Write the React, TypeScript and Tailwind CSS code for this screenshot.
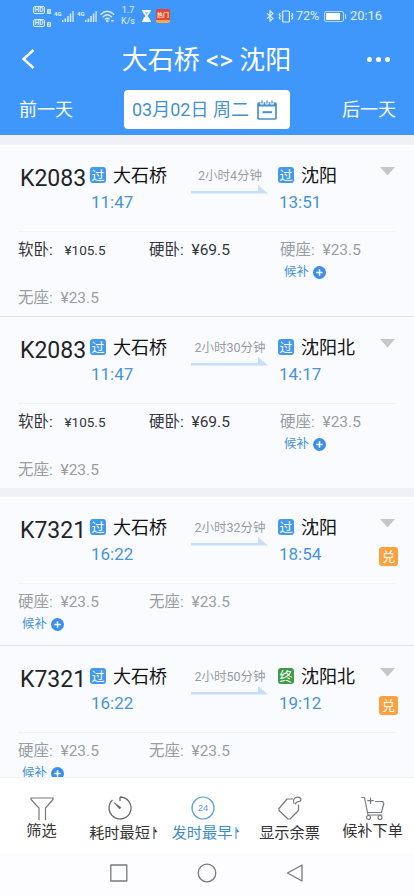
import type { ReactNode } from "react";
import clsx from "clsx";

interface Seat {
  label: string;
  price: string;
  available?: boolean;
  small?: boolean;
  waitlist?: boolean;
}

interface Train {
  code: string;
  from: string;
  to: string;
  depart: string;
  arrive: string;
  duration: string;
  terminal?: boolean;
  exchange?: boolean;
  seats: Seat[];
}

const sleeperSeats: Seat[] = [
  { label: "软卧", price: "¥105.5", available: true, small: true },
  { label: "硬卧", price: "¥69.5", available: true },
  { label: "硬座", price: "¥23.5", waitlist: true },
  { label: "无座", price: "¥23.5" },
];

const basicSeats: Seat[] = [
  { label: "硬座", price: "¥23.5", waitlist: true },
  { label: "无座", price: "¥23.5" },
];

const groups: Train[][] = [
  [
    { code: "K2083", from: "大石桥", to: "沈阳", depart: "11:47", arrive: "13:51", duration: "2小时4分钟", seats: sleeperSeats },
    { code: "K2083", from: "大石桥", to: "沈阳北", depart: "11:47", arrive: "14:17", duration: "2小时30分钟", seats: sleeperSeats },
  ],
  [
    { code: "K7321", from: "大石桥", to: "沈阳", depart: "16:22", arrive: "18:54", duration: "2小时32分钟", exchange: true, seats: basicSeats },
    { code: "K7321", from: "大石桥", to: "沈阳北", depart: "16:22", arrive: "19:12", duration: "2小时50分钟", terminal: true, exchange: true, seats: basicSeats },
  ],
];

function Signal({ className }: { className?: string }) {
  return (
    <div className={clsx("flex items-start", className)}>
      <span className="text-[6px] leading-[7px] font-bold">4G</span>
      <svg width="12" height="12" viewBox="0 0 12 12" fill="#dcecff" className="mt-px">
        <path d="M0 9h1.5v2H0zM2.6 7.4h1.5V11H2.6zM5.2 5h1.5v6H5.2zM7.8 2.6h1.5V11H7.8zM10.4 0h1.3v11h-1.3z" />
      </svg>
    </div>
  );
}

function HdTag({ sim }: { sim: string }) {
  return (
    <div className="flex h-[9px] items-end gap-[2px]">
      <span className="flex h-[8px] w-[12px] items-center justify-center rounded-[2px] border border-[#dcecff] text-[6.5px] leading-none font-bold">
        HD
      </span>
      <span className="flex h-[5px] w-[4px] items-center justify-center rounded-[1px] bg-[#dcecff] text-[4px] leading-none font-bold text-[#3f97fb]">
        {sim}
      </span>
    </div>
  );
}

function StatusBar() {
  return (
    <div className="flex h-[32px] items-center text-[#e4f1ff]">
      <div className="ml-[33px] flex w-[21px] flex-col gap-[4px]">
        <HdTag sim="1" />
        <HdTag sim="2" />
      </div>
      <Signal className="w-[23px]" />
      <Signal className="w-[23px]" />
      <svg width="15" height="13" viewBox="0 0 15 13" fill="none" stroke="#dcecff" strokeWidth="1.4" strokeLinecap="round">
        <path d="M1 4.2Q7.3-1.5 13.6 4.2M3.2 6.7Q7.3 3 11.4 6.7M5.4 9Q7.3 7.3 9.2 9" />
        <circle cx="7.3" cy="11" r=".6" fill="#dcecff" />
        <path d="M11.6 10.8h1.7" />
      </svg>
      <div className="ml-[4px] w-[18px] text-center text-[9px] leading-[11px]">
        <div>1.7</div>
        <div>K/s</div>
      </div>
      <svg width="9" height="12" viewBox="0 0 9 12" className="ml-[5px]">
        <path d="M0 0h9v1.6H8C8 4 6 5 5.4 6 6 7 8 8 8 10.4h1V12H0v-1.6h1C1 8 3 7 3.6 6 3 5 1 4 1 1.6H0z" fill="#fff" />
        <path d="M2.5 2h4L4.5 4.2z" fill="#8cc2fc" />
      </svg>
      <div className="ml-[5px] flex h-[14px] w-[14px] flex-col items-center justify-center rounded-[2px] border-b-[3px] border-[#f3a956] bg-[#e84234] text-[6px] leading-none font-bold text-[#ffe9c0]">
        热门
      </div>
      <svg width="9" height="12" viewBox="0 0 9 12" fill="none" stroke="#e4f1ff" strokeWidth="1.1" className="ml-[96px]">
        <path d="M1 3.3l6 5.2-3 2.700V.8l3 2.700L1 8.700" />
      </svg>
      <svg width="16" height="13" viewBox="0 0 16 13" fill="none" stroke="#e4f1ff" strokeWidth="1.2" className="ml-[3px]">
        <rect x="4.6" y="1" width="6.8" height="11" rx="1" />
        <path d="M2.4 3l-1.2 1.5 1.2 1.6-1.2 1.6 1.2 1.8M13.6 3l1.2 1.5-1.2 1.6 1.2 1.6-1.2 1.8" />
      </svg>
      <span className="ml-[2px] w-[28px] text-[12.5px]">72%</span>
      <div className="flex h-[11px] w-[20px] rounded-[2px] border border-[#b8d8fd] p-px">
        <div className="w-[14px] bg-white" />
      </div>
      <div className="ml-px h-[5px] w-px bg-[#dcecff]" />
      <span className="ml-[4px] text-[12.8px]">20:16</span>
    </div>
  );
}

function Header() {
  return (
    <header className="h-[135px] bg-[#3f97fb] text-white">
      <StatusBar />
      <div className="flex h-[54px] items-center">
        <svg width="14" height="20" viewBox="0 0 14 20" fill="none" stroke="#fff" strokeWidth="2.4" className="ml-[21px]">
          <path d="M12.5 1L2.5 10l10 9" />
        </svg>
        <h1 className="flex-1 pt-[2px] pl-[11px] text-center text-[26px] leading-[36px] whitespace-nowrap">
          大石桥 &lt;&gt; 沈阳
        </h1>
        <div className="mr-[24px] flex w-[23px] justify-between">
          <span className="size-[5px] rounded-full bg-white" />
          <span className="size-[5px] rounded-full bg-white" />
          <span className="size-[5px] rounded-full bg-white" />
        </div>
      </div>
      <div className="mt-[4px] flex h-[39px] items-center justify-between pr-[18px] pl-[19px] text-[18px] leading-[24px]">
        <button className="w-[54px] pt-px whitespace-nowrap">前一天</button>
        <button className="-ml-px flex h-[39px] w-[166px] items-center rounded-[4px] bg-white pl-[8px] whitespace-nowrap text-[#4591cf]">
          <span className="w-[125px] text-left">03月02日 周二</span>
          <svg width="20" height="20" viewBox="0 0 20 20" fill="none" stroke="#4591cf" strokeWidth="1.7">
            <rect x="1" y="3" width="18" height="16" rx="1" />
            <path d="M1 5h18" strokeWidth="3" />
            <path d="M5.5 12.2h9.5" strokeWidth="2" />
            <path d="M5 .5v4M10 .5v4M15 .5v4" stroke="#fff" strokeWidth="3.2" />
            <path d="M5 .5v3M10 .5v3M15 .5v3" strokeWidth="1.3" />
          </svg>
        </button>
        <button className="w-[54px] pt-px whitespace-nowrap">后一天</button>
      </div>
    </header>
  );
}

function StationBadge({ terminal }: { terminal?: boolean }) {
  return (
    <span
      className={clsx(
        "mb-[2px] flex size-[16px] items-center justify-center rounded-[3px] text-[13px] leading-none text-white",
        terminal ? "bg-[#3d9b46]" : "bg-[#4299ee]",
      )}
    >
      {terminal ? "终" : "过"}
    </span>
  );
}

function Station({ name, time, terminal }: { name: string; time: string; terminal?: boolean }) {
  return (
    <div>
      <div className="flex h-[24px] items-center gap-[7px] text-[18px] leading-[24px] whitespace-nowrap text-[#111]">
        <StationBadge terminal={terminal} />
        {name}
      </div>
      <div className="mt-[3px] pl-px text-[17px] leading-[22px] text-[#4794d4]">{time}</div>
    </div>
  );
}

function SeatCell({ seat }: { seat: Seat }) {
  return (
    <div className={clsx("h-[48px]", seat.available ? "text-[#33353b]" : "text-[#9b9da3]")}>
      <div className="flex h-[22px] items-center leading-[22px]">
        <span className={clsx("text-[15.5px]", seat.small ? "w-[46.5px]" : "w-[42.5px]")}>{seat.label}:</span>
        <span className={seat.small ? "text-[13.5px]" : "text-[15.5px]"}>{seat.price}</span>
      </div>
      {seat.waitlist && (
        <div className="flex h-[22px] items-center gap-[4px] pl-[4px] text-[12.5px] leading-[16px] text-[#4492d6]">
          候补
          <svg width="13" height="13" viewBox="0 0 13 13">
            <circle cx="6.5" cy="6.5" r="6.5" fill="#3b8eea" />
            <path d="M6.5 3.3v6.4M3.3 6.5h6.4" stroke="#fff" strokeWidth="1.5" />
          </svg>
        </div>
      )}
    </div>
  );
}

function TrainCard({ train, last }: { train: Train; last: boolean }) {
  return (
    <article className={clsx("bg-[#fafbff]", !last && "border-b border-[#dfe0e4]")}>
      <div className="flex h-[86px] pt-[19px]">
        <div className="w-[90px] pl-[20px] text-[23px] leading-[29px] text-[#222327]">{train.code}</div>
        <div className="w-[101px]">
          <Station name={train.from} time={train.depart} />
        </div>
        <div className="w-[87px] pt-[4px] text-[12.5px] leading-[16px] whitespace-nowrap text-[#999ba2]">
          <div className="w-[78px] text-center">{train.duration}</div>
          <svg width="77" height="9" viewBox="0 0 77 9" fill="#c5defa" className="mt-px">
            <path d="M0 6h67V0l10 8.5H0z" />
          </svg>
        </div>
        <div className="w-[102px]">
          <Station name={train.to} time={train.arrive} terminal={train.terminal} />
        </div>
        <div className="flex flex-col items-start">
          <svg width="15" height="9" viewBox="0 0 15 9" fill="#c5c7cb" className="mt-[3px]">
            <path d="M0 0h15L7.5 8.5z" />
          </svg>
          {train.exchange && (
            <span className="mt-[19px] -ml-px flex size-[19px] items-center justify-center rounded-[3px] bg-[#fba13d] text-[13px] leading-none text-white">
              兑
            </span>
          )}
        </div>
      </div>
      <div className="mr-[18px] ml-[18px] h-px bg-[#f0f1f4]" />
      <div className={clsx("grid grid-cols-[131px_131px_131px] content-start pt-[7px] pl-[18px]", train.seats.length > 3 ? "h-[84px]" : "h-[61px]")}>
        {train.seats.map((seat) => (
          <SeatCell key={seat.label} seat={seat} />
        ))}
      </div>
    </article>
  );
}

function Tab({ label, icon, active, sort, width }: { label: string; icon: ReactNode; active?: boolean; sort?: boolean; width: string }) {
  return (
    <button className={clsx("flex flex-col items-center pt-[18px]", width, active ? "text-[#3c8bc8]" : "text-[#333]")}>
      {icon}
      <span className={clsx("flex items-center text-[15.2px] leading-[20px] whitespace-nowrap", sort && "mt-[2px] pl-[7px]")}>
        {label}
        {sort && (
          <svg width="5" height="14" viewBox="0 0 5 14" className="ml-[3px]">
            <path d="M1 1v12" stroke="currentColor" />
            <path d="M1.500 2.500L4.500 6l-3 .5z" fill="currentColor" />
          </svg>
        )}
      </span>
    </button>
  );
}

function BottomTabs() {
  return (
    <nav className="flex h-[76px] border-t border-[#eff2f4] bg-white">
      <Tab
        label="筛选"
        width="w-[83px]"
        icon={
          <svg width="24" height="25" viewBox="0 0 24 25" fill="none" stroke="#77797d" strokeWidth="1.2">
            <path d="M9 24V12L1 3.500V2h22v1.500L15.500 12v12" />
          </svg>
        }
      />
      <Tab
        label="耗时最短"
        width="w-[74px]"
        sort
        icon={
          <svg width="24" height="25" viewBox="0 0 24 25" fill="none" stroke="#66686c" strokeWidth="1.3">
            <path d="M12 1v4M12 1a11 11 0 1 1-7.5 3" />
            <path d="M6 6.500l7 5-1.500 1.500z" fill="#66686c" strokeWidth=".6" />
          </svg>
        }
      />
      <Tab
        label="发时最早"
        width="w-[91px]"
        active
        sort
        icon={
          <svg width="24" height="25" viewBox="0 0 24 25" fill="none">
            <circle cx="12" cy="12" r="11" stroke="#5b9ede" strokeWidth="1.2" />
            <text x="12" y="15.2" textAnchor="middle" fontSize="9.5" fill="#5b9ede" className="font-['Liberation_Sans']">24</text>
          </svg>
        }
      />
      <Tab
        label="显示余票"
        width="w-[83px]"
        icon={
          <svg width="24" height="27" viewBox="0 0 24 27" fill="none" stroke="#77797d" strokeWidth="1.2" strokeLinejoin="round" strokeLinecap="round">
            <path d="M15 3H9L1 12.500v2l9 8.500h2l8.500-8.500V9" />
            <path d="M16 7.500C14.500 4.500 16 1.500 19.500 1.200c4-.2 4.500 4 1.500 4.300-1.800.2-3.200.5-3.500 2.500" />
          </svg>
        }
      />
      <Tab
        label="候补下单"
        width="w-[83px]"
        icon={
          <svg width="24" height="25" viewBox="0 0 24 25" fill="none" stroke="#77797d" strokeWidth="1.2" strokeLinecap="round" strokeLinejoin="round">
            <path d="M.7 1.500h2.800l3.500 17.500h14M6.500 16.500h14l2.300-9-1-2h-7.300M9.500 2v5.500M6.800 4.700h5.400" />
            <circle cx="7.500" cy="21.500" r="2" />
            <circle cx="19" cy="21.500" r="2" />
          </svg>
        }
      />
    </nav>
  );
}

function SystemNav() {
  return (
    <div className="flex h-[43px] items-center bg-[#fdfdff] pb-[3px] pl-[110px]">
      <svg width="194" height="20" viewBox="0 0 194 20" fill="none" stroke="#77787c" strokeWidth="1.3" strokeLinejoin="round">
        <rect x=".8" y="2" width="16" height="16" />
        <circle cx="97" cy="10" r="8.8" />
        <path d="M177.500 10L192 2v16z" />
      </svg>
    </div>
  );
}

export default function App() {
  return (
    <div className="flex h-[896px] w-[414px] flex-col overflow-hidden bg-[#f1f0f5] font-[Roboto,'Noto_Sans_CJK_SC',sans-serif]">
      <Header />
      <main className="flex h-[642px] shrink-0 flex-col gap-[9px] overflow-hidden pt-[10px]">
        {groups.map((trains, i) => (
          <section key={i} className="shrink-0">
            {trains.map((train, j) => (
              <TrainCard key={train.to} train={train} last={j === trains.length - 1} />
            ))}
          </section>
        ))}
      </main>
      <BottomTabs />
      <SystemNav />
    </div>
  );
}
